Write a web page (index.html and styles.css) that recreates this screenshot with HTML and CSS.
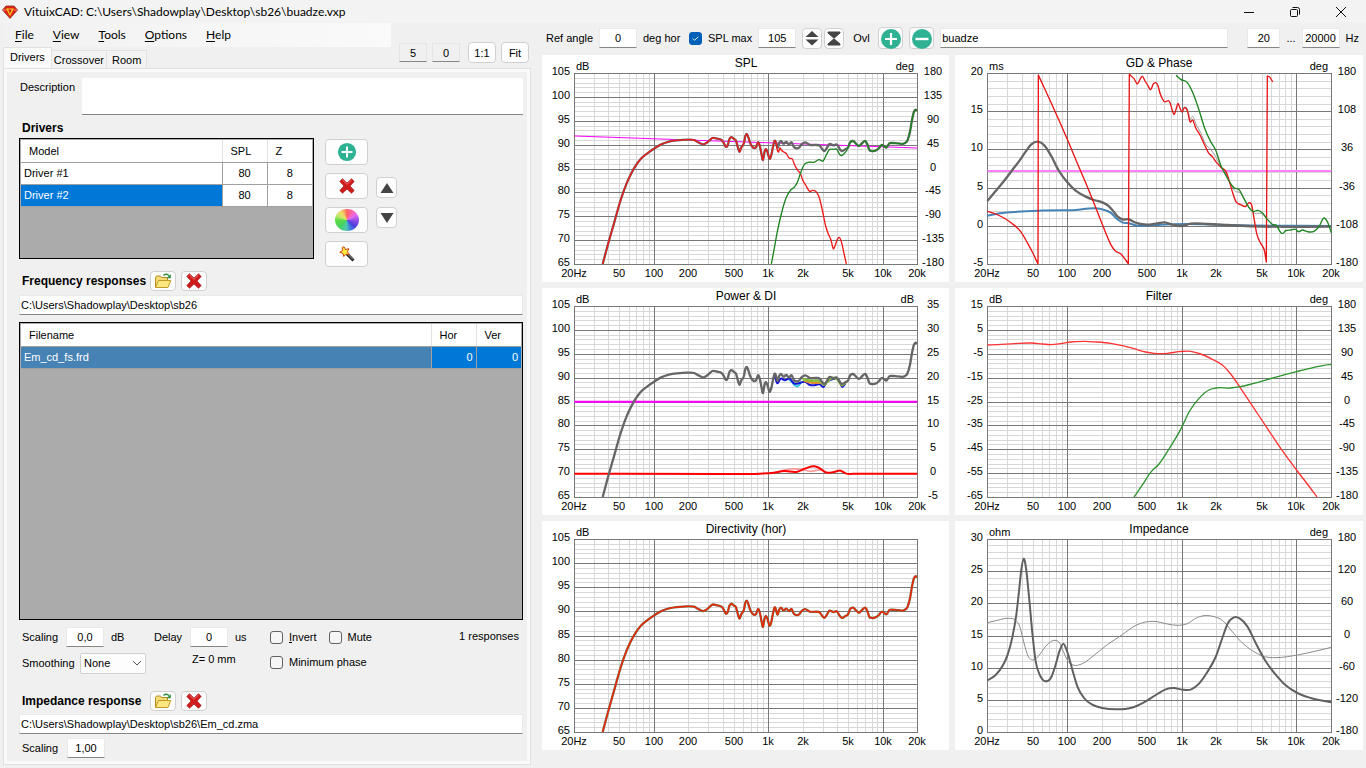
FILE: index.html
```html
<!DOCTYPE html>
<html lang="en">
<head>
<meta charset="utf-8">
<title>VituixCAD</title>
<link rel="stylesheet" href="styles.css">
</head>
<body>
<svg class="defs" aria-hidden="true">
  <symbol id="i-plus" viewBox="0 0 22 22"><circle cx="11" cy="11" r="10" fill="#2fb193"/><path d="M11 5v12M5 11h12" stroke="#fff" stroke-width="2.2"/></symbol>
  <symbol id="i-minus" viewBox="0 0 22 22"><circle cx="11" cy="11" r="10" fill="#2fb193"/><path d="M4.500 11h13" stroke="#fff" stroke-width="2.400"/></symbol>
  <symbol id="i-del" viewBox="0 0 16 16"><path d="M3.500 .8L8 5l4.500-4.200 2.700 2.600L11 8l4.200 4.600-2.700 2.600L8 11l-4.500 4.200L.8 12.600 5 8 .8 3.400z" fill="#d01c1c" stroke="#a51212" stroke-width=".7"/><path d="M3.500 2L8 6.300 12.500 2" fill="none" stroke="#f06a6a" stroke-width="1"/></symbol>
  <symbol id="i-open" viewBox="0 0 18 16"><path d="M1.500 14.500V4.500l1-1.500h4l1 1.500h6v3" fill="#f3dc75" stroke="#b58c1c"/><path d="M1.500 14.500L4.500 7.500h12.300L14 14.500z" fill="#fbe680" stroke="#c39a25"/><path d="M9.500 2.500c2-1.800 4-1.400 5.300.3" fill="none" stroke="#2f8f3b" stroke-width="1.500"/><path d="M16.800 1v4.200h-4.200z" fill="#2f8f3b"/></symbol>
</svg>
<div class="window">
  <header class="titlebar">
    <svg class="logo" viewBox="0 0 16 14"><path d="M4 1h8l3.500 4L8 13.500.5 5z" fill="#e02413" stroke="#8d2c20" stroke-width=".8"/><path d="M4 3.500h8L8 11z" fill="#f6c928"/><path d="M6.200 4.500L8 8.500l1.800-4z" fill="#d31d10"/><path d="M1 5h3M12 5h3" stroke="#ff7d62"/></svg>
    <h1 class="title">VituixCAD: C:\Users\Shadowplay\Desktop\sb26\buadze.vxp</h1>
    <div class="win-controls">
      <button aria-label="Minimize"><svg viewBox="0 0 12 12"><path d="M1 6.500h10"/></svg></button>
      <button aria-label="Restore"><svg viewBox="0 0 12 12"><rect x="1.500" y="3.500" width="7" height="7" rx="1"/><path d="M3.500 1.500h5a2 2 0 0 1 2 2v5"/></svg></button>
      <button aria-label="Close"><svg viewBox="0 0 12 12"><path d="M1 1l10 10M11 1L1 11"/></svg></button>
    </div>
  </header>
  <div class="main">
    <section class="left">
      <div class="left-head">
        <div class="nav">
          <nav class="menu">
            <button><u>F</u>ile</button><button><u>V</u>iew</button><button><u>T</u>ools</button><button><u>O</u>ptions</button><button><u>H</u>elp</button>
          </nav>
          <div class="tabs" role="tablist">
            <button role="tab" aria-selected="true" class="tab active">Drivers</button><button role="tab" class="tab">Crossover</button><button role="tab" class="tab">Room</button>
          </div>
        </div>
        <div class="zoom-tools">
          <input class="field flat" value="5" aria-label="Grid step">
          <input class="field flat" value="0" aria-label="Offset">
          <button class="btn first">1:1</button>
          <button class="btn">Fit</button>
        </div>
      </div>
      <div class="pane">
        <div class="description">
          <label for="desc">Description</label>
          <textarea id="desc"></textarea>
        </div>
        <h2 class="drivers-title">Drivers</h2>
        <div class="drivers">
          <div class="grid-box drivers-box">
            <table class="drivers-table">
              <colgroup><col><col class="c45"><col class="c45"></colgroup>
              <thead><tr><th>Model</th><th>SPL</th><th>Z</th></tr></thead>
              <tbody>
                <tr><td>Driver #1</td><td class="mid">80</td><td class="mid">8</td></tr>
                <tr><td class="sel">Driver #2</td><td class="mid">80</td><td class="mid">8</td></tr>
              </tbody>
            </table>
          </div>
          <div class="stack">
            <button class="btn wide" aria-label="Add driver"><svg class="ic20"><use href="#i-plus"/></svg></button>
            <button class="btn wide" aria-label="Delete driver"><svg class="ic16"><use href="#i-del"/></svg></button>
            <button class="btn wide" aria-label="Colour"><span class="wheel"></span></button>
            <button class="btn wide" aria-label="Wizard"><svg class="ic16" viewBox="0 0 16 16"><path d="M7.500 7.500l7 7" stroke="#222" stroke-width="3"/><path d="M8.500 8l5.500 5.500" stroke="#999" stroke-width="1"/><path d="M5 .8l1.500 2.700 3.300-.8-1.300 3 1.800 2.700-3.200-.2L4.800 10.500l-.9-3L.8 6.300l2.700-1.700L3.300 1.500z" fill="#ffe83c" stroke="#c9451b"/></svg></button>
          </div>
          <div class="arrows">
            <button class="btn" aria-label="Move up"><svg class="ic14" viewBox="0 0 14 14"><path d="M7 2l6.500 10H.5z" fill="#444"/></svg></button>
            <button class="btn" aria-label="Move down"><svg class="ic14" viewBox="0 0 14 14"><path d="M7 12L.5 2h13z" fill="#444"/></svg></button>
          </div>
        </div>
        <div class="section-head freq-head">
          <h2>Frequency responses</h2>
          <button class="btn small" aria-label="Open responses"><svg class="ic16"><use href="#i-open"/></svg></button>
          <button class="btn small" aria-label="Clear responses"><svg class="ic16"><use href="#i-del"/></svg></button>
        </div>
        <input class="field path" value="C:\Users\Shadowplay\Desktop\sb26" aria-label="Frequency response folder">
        <div class="grid-box files-box">
          <table>
            <colgroup><col><col class="c45"><col class="c45"></colgroup>
            <thead><tr><th>Filename</th><th>Hor</th><th>Ver</th></tr></thead>
            <tbody><tr><td class="file">Em_cd_fs.frd</td><td class="sel num">0</td><td class="sel num">0</td></tr></tbody>
          </table>
        </div>
        <div class="settings">
          <div class="col-a">
            <div class="line"><label for="scale">Scaling</label><input id="scale" class="field n" value="0,0"><span>dB</span></div>
            <div class="line second"><label for="smooth">Smoothing</label>
              <span class="select-wrap"><select id="smooth"><option>None</option></select><svg viewBox="0 0 10 6"><path d="M1 1l4 4 4-4"/></svg></span></div>
          </div>
          <div class="col-b">
            <div class="line"><label for="delay">Delay</label><input id="delay" class="field n" value="0"><span>us</span></div>
            <div class="zmm">Z= 0 mm</div>
          </div>
          <div class="col-c">
            <div class="line"><label class="check"><input type="checkbox"><span><u>I</u>nvert</span></label><label class="check"><input type="checkbox"><span>Mute</span></label></div>
            <div class="line third"><label class="check"><input type="checkbox"><span>Minimum phase</span></label></div>
          </div>
          <div class="count">1 responses</div>
        </div>
        <div class="section-head imp-head">
          <h2>Impedance response</h2>
          <button class="btn small" aria-label="Open impedance"><svg class="ic16"><use href="#i-open"/></svg></button>
          <button class="btn small" aria-label="Clear impedance"><svg class="ic16"><use href="#i-del"/></svg></button>
        </div>
        <input class="field path" value="C:\Users\Shadowplay\Desktop\sb26\Em_cd.zma" aria-label="Impedance file">
        <div class="line last"><label for="zscale">Scaling</label><input id="zscale" class="field n" value="1,00"></div>
      </div>
    </section>
    <section class="right">
      <div class="toolbar">
        <label for="ref" class="l-ref">Ref angle</label><input id="ref" class="field n" value="0"><span class="deg">deg hor</span>
        <label class="check"><input type="checkbox" checked><span>SPL max</span></label>
        <input class="field n" value="105" aria-label="SPL max">
        <button class="btn sq" aria-label="Expand"><svg class="ic16" viewBox="0 0 16 16"><path d="M8 1l6.500 6h-13zM8 15.500L1.500 9.500h13z" fill="#444"/></svg></button>
        <button class="btn sq" aria-label="Fit range"><svg class="ic16" viewBox="0 0 16 16"><path d="M2 2h12v1L8 8.200 2 3zM2 15h12v-1L8 8.800 2 14z" fill="#444" stroke="#444"/></svg></button>
        <label for="ovl" class="ovl">Ovl</label>
        <button class="btn add" aria-label="Add overlay"><svg class="ic22"><use href="#i-plus"/></svg></button>
        <button class="btn add" aria-label="Remove overlay"><svg class="ic22"><use href="#i-minus"/></svg></button>
        <input id="ovl" class="field name" value="buadze">
        <input class="field f-low" value="20" aria-label="Lowest frequency"><span>...</span>
        <input class="field n" value="20000" aria-label="Highest frequency"><span>Hz</span>
      </div>
      <div class="charts" id="charts"></div>
    </section>
  </div>
</div>
<script src="charts.js"></script>
</body>
</html>
```
FILE: styles.css
```css
* { box-sizing: border-box; }
html, body { height: 100%; margin: 0; }
body { background: #f0f0f0; color: #000; font: 11px/14px "Liberation Sans", Arial, sans-serif; }
button, input, select, textarea { font: inherit; color: inherit; margin: 0; }
button { background: none; border: 0; padding: 0; }
h1, h2 { margin: 0; }
h2 { font-size: 12px; line-height: 14px; }
.defs { display: none; }
.window { height: 100%; display: flex; flex-direction: column; }

.titlebar { flex: none; height: 23px; display: flex; align-items: center; background: #f3f3f3; padding: 0 2px; }
.logo { width: 16px; height: 14px; }
.title { flex: 1; padding-left: 6px; font: 12px/16px Lato, "Noto Sans", sans-serif; }
.win-controls { display: flex; }
.win-controls button { width: 46px; height: 22px; display: grid; place-items: center; }
.win-controls svg { width: 12px; height: 12px; fill: none; stroke: #111; }

.main { flex: 1; min-height: 0; display: grid; grid-template-columns: 532px 1fr; }
.left { display: flex; flex-direction: column; min-height: 0; padding: 0 1px 3px 3px; }
.left-head { display: flex; justify-content: space-between; height: 45px; }
.nav { width: 388px; }
.menu { height: 24px; display: flex; align-items: center; gap: 19px; padding-left: 12px; background: linear-gradient(90deg, #f1f1f1, #fafafa); font: 12px/16px Lato, "Noto Sans", sans-serif; }
.menu u { text-underline-offset: 2px; }
.tabs { display: flex; align-items: flex-end; height: 21px; }
.tab { height: 18px; padding: 0 2px; border: 1px solid #e1e1e1; border-bottom: 0; border-left: 0; background: #f3f3f3; }
.tab.active { height: 21px; padding: 0 6px 2px; background: #fafafa; border-left: 1px solid #e1e1e1; }
.tab:last-child { padding: 0 5px; }
.zoom-tools { display: flex; align-items: center; gap: 5px; padding: 14px 2px 0 0; }

.field { height: 20px; border: 1px solid #e9e9e9; border-bottom-color: #868686; background: #fff; padding: 0; text-align: center; border-radius: 0; }
.field.flat { width: 28px; height: 19px; background: #f0f0f0; border-color: #e4e4e4; border-bottom-color: #868686; }
.field.n { width: 38px; }
.btn { display: grid; place-items: center; background: #fdfdfd; border: 1px solid #d0d0d0; border-radius: 4px; }
.zoom-tools .btn { width: 28px; height: 21px; }
.zoom-tools .first { margin-left: 3px; }
.ic14 { width: 14px; height: 14px; }
.ic16 { width: 18px; height: 16px; }
.ic20 { width: 20px; height: 20px; }
.ic22 { width: 22px; height: 22px; }

.pane { flex: 1; min-height: 0; display: flex; flex-direction: column; border: 1px solid #e1e1e1; outline: 3px solid #fafafa; outline-offset: -4px; padding: 9px 7px 6px 15px; }
.description { display: flex; }
.description label { width: 63px; padding: 2px 0 0 1px; }
.description textarea { flex: 1; height: 37px; border: 0; border-bottom: 1px solid #868686; background: #fff; resize: none; border-radius: 0; }
.drivers-title { padding-left: 3px; margin: 6px 0 3px; }
.drivers { display: flex; height: 130px; }
.grid-box { border: 1px solid #000; background: #ababab; padding: 1px; }
.drivers-box { width: 295px; height: 121px; }
table { width: 100%; border-collapse: collapse; table-layout: fixed; }
.c45 { width: 45px; }
th { height: 22px; padding: 0 8px; background: #fff; font-weight: normal; text-align: left; border: 1px solid #a0a0a0; border-left-color: #e2e2e2; border-right-color: #e2e2e2; border-top: 0; }
td { height: 22px; padding: 0 3px; background: #fff; border: 1px solid #a0a0a0; }
th:first-child, td:first-child { border-left: 0; }
th:last-child, td:last-child { border-right: 0; }
.mid { text-align: center; }
.num { text-align: right; }
.sel { background: #0078d7; color: #fff; }
.file { background: #4682b4; color: #fff; }
.stack { display: flex; flex-direction: column; gap: 8px; margin: 0 8px 0 11px; padding-top: 1px; }
.btn.wide { width: 43px; height: 26px; }
.arrows { display: flex; flex-direction: column; gap: 9px; padding-top: 39px; }
.arrows .btn { width: 21px; height: 21px; }
.wheel { width: 24px; height: 22px; border-radius: 50%; background: conic-gradient(#ff6464, #ff64a0 8%, #e36cf0 17%, #9a50e6 25%, #4a3ed8 36%, #3c82dc 44%, #50c8b4 51%, #46d264 62%, #5adc46 74%, #c8e66e 82%, #f0dc64 90%, #ff6464); }

.section-head { display: flex; align-items: center; height: 20px; gap: 5px; padding-left: 3px; }
.section-head h2 { width: 123px; white-space: nowrap; }
.btn.small { width: 26px; height: 20px; }
.freq-head { margin: 3px 0 4px; }
.path { width: 100%; text-align: left; padding-left: 1px; }
.files-box { flex: 1; margin: 7px 0 7px; }

.settings { display: flex; align-items: flex-start; height: 46px; padding: 0 4px 0 3px; }
.line { display: flex; align-items: center; height: 20px; gap: 7px; }
.col-a { width: 132px; }
.col-a .line label { width: 37px; }
.col-a .line.second label { width: 51px; }
.second { margin-top: 6px; }
.select-wrap { position: relative; display: flex; }
.select-wrap select { width: 66px; height: 21px; appearance: none; background: #fdfdfd; border: 1px solid #d0d0d0; border-radius: 2px; padding: 0 3px; }
.select-wrap svg { position: absolute; right: 4px; top: 7px; width: 10px; height: 6px; fill: none; stroke: #555; pointer-events: none; }
.col-b { width: 116px; }
.col-b .line label { width: 29px; }
.zmm { padding: 5px 0 0 38px; }
.col-c .line { gap: 12px; }
.third { margin-top: 5px; }
.check { display: flex; align-items: center; gap: 6px; white-space: nowrap; }
.check input { appearance: none; width: 13px; height: 13px; border: 1px solid #626262; border-radius: 3px; background: #f6f6f6; }
.check input:checked { background: #005fb8 url("data:image/svg+xml,%3Csvg xmlns='http://www.w3.org/2000/svg' viewBox='0 0 12 12'%3E%3Cpath d='M3 6l2 2 4-4' fill='none' stroke='white'/%3E%3C/svg%3E"); border-color: #005fb8; }
.count { margin-left: auto; padding-top: 2px; }
.imp-head { margin: 18px 0 3px; }
.last { margin-top: 4px; padding-left: 3px; gap: 8px; }
.last label { width: 37px; }

.right { display: flex; flex-direction: column; min-width: 0; min-height: 0; padding: 0 3px 18px 10px; }
.toolbar { height: 32px; display: flex; align-items: center; gap: 6px; padding: 0 4px 2px; white-space: nowrap; }
.l-ref { width: 47px; }
.deg { width: 40px; }
.btn.sq { width: 20px; height: 21px; }
.btn.sq + .btn.sq { margin-left: -4px; }
.ovl { width: 19px; margin-left: 3px; }
.btn.add { width: 25px; height: 22px; }
.field.name { flex: 1; min-width: 0; text-align: left; padding-left: 1px; margin-right: 13px; }
.f-low { width: 33px; }

.charts { flex: 1; min-height: 0; display: grid; grid-template-columns: 407fr 408fr; grid-template-rows: 227fr 227fr 229fr; gap: 6px; }
.chart { margin: 0; background: #fff; min-width: 0; min-height: 0; }
.chart svg { display: block; width: 100%; height: 100%; font: 11px "Liberation Sans", Arial, sans-serif; }
.chart .heading { font-size: 12px; }
.minor { stroke: #d8d8d8; shape-rendering: crispEdges; fill: none; }
.major { stroke: #787878; shape-rendering: crispEdges; fill: none; }
.curve { fill: none; stroke-linejoin: round; }
.mid-t { text-anchor: middle; }
.end-t { text-anchor: end; }
```
FILE: charts.js
```js
const pts = s => s.trim().split(/\s+/).map(p => p.split(',').map(Number));

// Smooth curve y(x) through a run of points with increasing x.
function smooth(p) {
  const n = p.length, m = [];
  const d = i => (p[i + 1][1] - p[i][1]) / (p[i + 1][0] - p[i][0]);
  const h = i => p[i + 1][0] - p[i][0];
  for (let i = 0; i < n; i++) {
    if (i === 0) m.push(d(0));
    else if (i === n - 1) m.push(d(n - 2));
    else m.push((d(i - 1) * h(i) + d(i) * h(i - 1)) / (h(i - 1) + h(i)));
  }
  let out = '';
  for (let i = 0; i < n - 1; i++) {
    const [ax, ay] = p[i], [bx, by] = p[i + 1], k = (bx - ax) / 3;
    out += `C${ax + k} ${ay + k * m[i]} ${bx - k} ${by - k * m[i + 1]} ${bx} ${by}`;
  }
  return out;
}
// Runs separated by "|" are joined with straight lines (phase wraps).
const path = s => s.split('|').map((r, i) => { const p = pts(r); return (i ? 'L' : 'M') + p[0] + smooth(p); }).join('');
const shift = (s, f) => pts(s).map(([x, y]) => x + ',' + f(y)).join(' ');

const low = '176,642 190,590 210,520 230,450 250,395 270,355 290,327 310,310 330,296 350,284 375,275 400,271 432,269 450,270 465,278 478,283 490,277 505,264 520,266 535,272 541,282 546,291 552,283 556,268 560,262 570,267 576,272 581,290 586,305 592,292 600,278 604,258 608,252 614,265 618,278 628,293 636,292 643,277 648,290 653,315 657,330 661,308 666,297 671,308 676,326 682,315 687,290 692,272 697,282 ';
const mid = '700,293 706,278 711,273 718,281 727,276 735,283 743,277 749,290 757,295 765,293 772,284 783,277 798,285 815,285 828,288 835,298 841,303 848,295 855,283 868,286 880,285 887,297 893,303 905,297 ';
const high = '912,293 918,278 927,273 936,281 945,288 955,279 964,273 970,283 976,300 983,303 998,300 1005,294 1013,285 1020,288 1027,293 1036,280 1044,279 1062,280 1083,279 1090,272 1098,245 1105,205 1110,185 1115,179 1119,183';
const total = low + mid + high;
const dirTotal = shift(total, y => 64 + (y - 70) * 578 / 572);
const phase = '100,484 125,492 150,504 175,521 200,545 220,578 238,612 252,642|253,75 270,112 290,155 320,222 345,280 370,340 400,410 430,485 455,548 470,583 485,604 500,611 515,630 523,642|526,73 540,86 551,101 558,88 565,79 573,93 582,107 590,119 598,102 612,107 619,133 630,154 648,158 654,178 661,193 667,175 672,160 677,172 683,185 ';

const range = (a, b, step) => { const r = []; for (let v = a; step < 0 ? v >= b : v <= b; v += step) r.push(v); return r; };
const deg45 = range(180, -180, -45);

const charts = [
  { title: 'SPL', l: 'dB', r: 'deg', left: range(105, 65, -5), right: deg45, curves: [
    ['#f0f', 3, '91,258 1120,294'], ['#666', 7, total],
    ['#f01818', 4, low + '700,300 703,306 708,294 712,300 718,305 726,310 736,325 745,327 752,345 762,362 770,372 776,390 785,405 797,424 806,421 815,424 825,440 835,480 845,528 853,552 861,570 868,596 874,585 880,568 887,563 892,575 900,610 907,642'],
    ['#1c8420', 4, '682,642 690,600 700,545 715,480 727,442 740,420 753,409 762,392 770,368 780,345 792,337 810,337 825,329 838,332 847,315 855,300 868,298 880,300 886,312 892,317 900,311 907,303 ' + high]] },
  { title: 'GD & Phase', l: 'ms', r: 'deg', left: range(20, -5, -5), right: range(180, -180, -72), curves: [
    ['#ff80ff', 6, '100,363 1132,363'],
    ['#4682b4', 6, '100,497 130,491 180,486 252,482 350,481 455,481 470,488 490,508 505,517 525,520 550,527 580,527 620,524 700,522 850,526 1132,528'],
    ['#666', 7, '100,453 125,423 150,393 175,360 195,334 215,305 232,283 252,275 272,287 290,315 315,363 340,397 365,422 395,440 420,450 445,457 460,465 475,480 490,499 505,508 525,508 540,516 560,522 585,524 610,520 632,517 655,524 682,528 710,521 760,522 820,525 900,529 1132,530'],
    ['#999', 3, '683,185 694,170 702,182 708,207 716,199 727,225 740,248 755,283 770,298 785,320 803,354 816,372 830,403 845,424 858,428 875,455 897,487 925,492 940,508'],
    ['#e81414', 4, phase + '692,173 700,182 708,215 716,210 725,233 738,255 752,285 763,308 775,320 788,338 803,354 816,365 825,390 835,425 846,455 860,464 875,469 886,458 893,465 900,505 908,550 920,580 932,605 937,636|940,78 948,82 956,96'],
    ['#1c8420', 4, '666,76 680,88 700,98 718,132 735,180 752,235 770,275 785,300 800,345 815,375 827,396 840,413 857,421 868,442 885,473 897,485 910,481 925,488 940,508 955,523 968,527 977,543 985,551 995,542 1010,540 1025,538 1033,545 1045,540 1060,545 1080,544 1095,530 1110,504 1120,515 1132,548']] },
  { title: 'Power & DI', l: 'dB', r: 'dB', left: range(105, 65, -5), right: range(35, -5, -5), curves: [
    ['#f0f', 6, '91,350 1120,350'],
    ['#ff9a9a', 5, '690,563 740,552 770,553 800,559 830,555 850,563'],
    ['#f00', 6, '91,566 540,567 620,567 690,563 720,558 760,560 785,550 812,544 828,550 845,562 870,561 890,557 905,565 940,566 1120,566'],
    ['#38c8e8', 6, '735,284 745,292 752,301 765,301 772,290'],
    ['#1414d8', 6, '692,272 700,295 706,286 711,281 722,286 737,281 750,295 770,293 783,290 798,300 815,300 828,298 838,306 848,292 868,282 885,286 893,304 905,295'],
    ['#e08a30', 7, '780,287 800,293 830,293'],
    ['#8abf3c', 8, '776,283 800,287 828,289 841,299 855,284 880,283 893,300 907,291'],
    ['#666', 7, shift(total, y => y - 6)]] },
  { title: 'Filter', l: 'dB', r: 'deg', left: range(15, -65, -10), right: deg45, curves: [
    ['#f33', 4, '100,180 130,179 180,176 232,174 265,177 290,179 320,176 350,171 390,169 430,171 470,175 505,182 540,191 575,201 600,205 640,205 675,200 710,199 740,207 775,223 805,240 830,267 860,310 900,370 940,430 985,497 1030,558 1060,597 1089,636'],
    ['#2d942d', 4, '540,636 565,600 590,562 615,537 645,492 680,433 707,378 735,340 765,315 785,309 830,309 860,305 900,295 960,278 1027,260 1080,247 1110,241 1132,238']] },
  { title: 'Directivity (hor)', l: 'dB', r: '', left: range(105, 65, -5), right: [], curves: [
    ['#7a6a4a', 7, dirTotal], ['#f02400', 4, dirTotal]] },
  { title: 'Impedance', l: 'ohm', r: 'deg', left: range(30, 0, -5), right: range(180, -180, -60), curves: [
    ['#8a8a8a', 3, '100,314 130,307 165,301 185,307 197,325 210,375 222,414 237,426 255,412 275,385 290,371 303,367 317,375 328,400 342,430 357,441 385,437 420,412 460,380 505,350 540,325 575,312 600,310 640,318 670,322 700,317 725,301 750,293 780,296 805,307 830,335 860,370 900,401 925,414 965,419 1000,416 1060,405 1132,388'],
    ['#606060', 6, '100,487 125,471 145,445 160,413 175,358 187,290 195,220 202,155 209,122 216,150 224,225 235,345 245,430 258,472 275,490 292,477 305,440 317,398 328,377 340,402 355,455 370,505 390,540 415,560 445,570 490,574 530,570 570,553 610,528 635,514 660,510 685,515 712,514 735,497 760,462 785,417 805,360 822,315 840,298 858,302 880,325 905,375 935,430 965,470 995,502 1030,525 1070,540 1132,553']] }
];

const xLabels = [[20, '20Hz'], [50, '50'], [100, '100'], [200, '200'], [500, '500'], [1000, '1k'], [2000, '2k'], [5000, '5k'], [10000, '10k'], [20000, '20k']];
const esc = s => String(s).replace(/&/g, '&amp;');
const text = (x, y, cls, s) => `<text x="${x}" y="${y}" class="${cls}">${esc(s)}</text>`;

function draw(c, i) {
  const isRight = i % 2, lastRow = i > 3;
  const w = isRight ? 408 : 407, h = lastRow ? 229 : 227;
  const x0 = 32, x1 = isRight ? 376 : 375, y0 = 18, y1 = lastRow ? 211 : 209;
  const fx = f => Math.round(x0 + (x1 - x0) * Math.log10(f / 20) / 3);
  const n = c.left.length - 1;
  const fy = k => Math.round(y0 + (y1 - y0) * k / n);
  let minor = '', major = '';
  for (const dec of [10, 100, 1000, 10000]) for (let k = 1; k < 10; k++) {
    const f = dec * k;
    if (f <= 20 || f >= 20000) continue;
    const seg = `M${fx(f) + .5} ${y0}V${y1}`;
    if (k === 1) major += seg; else minor += seg;
  }
  for (let k = 0; k < n * 5; k++) minor += `M${x0} ${fy(k / 5) + .5}H${x1}`;
  for (let k = 1; k < n; k++) major += `M${x0} ${fy(k) + .5}H${x1}`;
  major += `M${x0 + .5} ${y0 + .5}H${x1 + .5}V${y1 + .5}H${x0 + .5}Z`;

  let t = text(Math.round(w / 2), 12, 'mid-t heading', c.title) + text(34, 15, '', c.l) + text(x1 - 3, 15, 'end-t', c.r);
  c.left.forEach((v, k) => t += text(28, fy(k) + 2, 'end-t', v));
  c.right.forEach((v, k) => t += text(x1 + 16, fy(k) + 2, 'mid-t', v));
  xLabels.forEach(([f, s]) => t += text(fx(f), y1 + 13, 'mid-t', s));

  const curves = c.curves.map(([col, sw, p]) => `<path class="curve" stroke="${col}" stroke-width="${sw}" d="${path(p)}"/>`).join('');
  const tx = isRight ? -1 : 2, ty = i < 2 ? -5 : -3;
  return `<figure class="chart"><svg viewBox="0 0 ${w} ${h}" role="img" aria-label="${esc(c.title)}">
    <path class="minor" d="${minor}"/><path class="major" d="${major}"/>
    <g transform="translate(${tx} ${ty}) scale(.33333)">${curves}</g>${t}</svg></figure>`;
}
document.getElementById('charts').innerHTML = charts.map(draw).join('');
```
